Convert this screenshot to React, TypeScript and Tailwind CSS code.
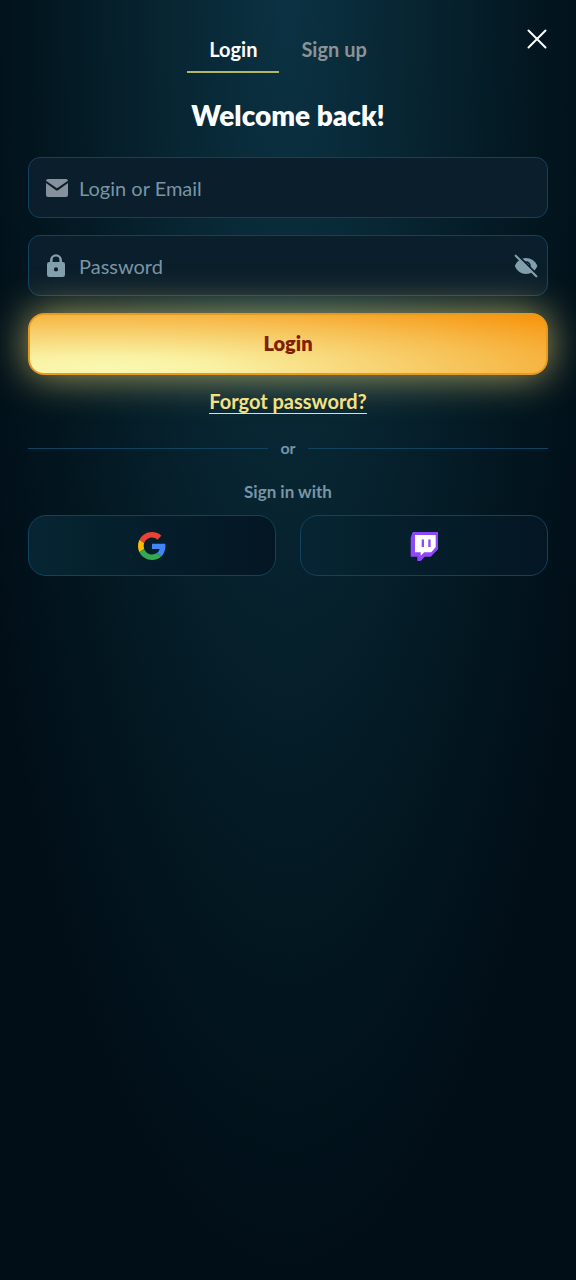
import { useState } from "react";

function MailIcon() {
  return (
    <svg viewBox="0 0 22 18" className="h-[18px] w-[22px] shrink-0 fill-[#87919c]" aria-hidden="true">
      <path d="M2 0h18a2 2 0 0 1 2 1.700L11.800 8.800a1.400 1.400 0 0 1-1.600 0L0 1.700A2 2 0 0 1 2 0z" />
      <path d="M0 4l9.600 6.900a2.400 2.400 0 0 0 2.800 0L22 4v12a2 2 0 0 1-2 2H2a2 2 0 0 1-2-2z" />
    </svg>
  );
}

function LockIcon() {
  return (
    <svg viewBox="0 0 18 23" className="h-[23px] w-[18px] shrink-0 fill-[#829fad]" aria-hidden="true">
      <path
        fillRule="evenodd"
        d="M3 8V6.200a6 6 0 0 1 12 0V8h.8A2.200 2.200 0 0 1 18 10.200v10.600A2.200 2.200 0 0 1 15.800 23H2.200A2.200 2.200 0 0 1 0 20.800V10.200A2.200 2.200 0 0 1 2.200 8zM5.600 8h6.800V6a3.400 3.400 0 0 0-6.800 0zM9 13.300a2.100 2.100 0 1 0 0 4.200 2.100 2.100 0 0 0 0-4.200z"
      />
    </svg>
  );
}

function EyeOffIcon() {
  return (
    <svg viewBox="0 0 24 24" className="h-6 w-6" aria-hidden="true">
      <mask id="eye-cut">
        <rect width="24" height="24" fill="white" />
        <path d="M10.500 8.600a3.600 3.600 0 0 1 5 4.800" fill="none" stroke="black" strokeWidth="1.500" />
        <path d="M3.200 0.600L24 21.400" stroke="black" strokeWidth="2" />
      </mask>
      <path d="M0.800 12C3 6.800 7.200 4 12 4s9.200 2.800 11.400 8c-2.200 5.200-6.600 8-11.400 8S3 17.200 0.800 12z" fill="#829fad" mask="url(#eye-cut)" />
      <path d="M1.700 1.700L22.300 22.300" stroke="#829fad" strokeWidth="2.200" strokeLinecap="round" />
    </svg>
  );
}

function GoogleIcon() {
  return (
    <svg viewBox="0 0 48 48" className="h-7 w-7" aria-hidden="true">
      <path fill="#EA4335" d="M24 9.500c3.540 0 6.710 1.220 9.210 3.600l6.850-6.850C35.900 2.380 30.470 0 24 0 14.620 0 6.510 5.380 2.560 13.220l7.980 6.190C12.430 13.720 17.740 9.500 24 9.500z" />
      <path fill="#4285F4" d="M46.980 24.550c0-1.570-.15-3.090-.38-4.550H24v9.020h12.940c-.58 2.960-2.260 5.480-4.780 7.180l7.730 6c4.510-4.180 7.090-10.360 7.090-17.650z" />
      <path fill="#FBBC05" d="M10.530 28.590c-.48-1.450-.76-2.990-.76-4.590s.27-3.140.76-4.590l-7.980-6.190C.92 16.460 0 20.120 0 24c0 3.880.92 7.540 2.560 10.780l7.970-6.190z" />
      <path fill="#34A853" d="M24 48c6.480 0 11.930-2.130 15.890-5.810l-7.730-6c-2.150 1.450-4.920 2.300-8.160 2.300-6.260 0-11.570-4.220-13.470-9.910l-7.980 6.190C6.510 42.620 14.620 48 24 48z" />
    </svg>
  );
}

function TwitchIcon() {
  return (
    <svg viewBox="0 0 28 30" className="h-[30px] w-7" aria-hidden="true">
      <path fill="#8d49f5" d="M2.700 1H28v17.300L20.700 25.700h-6L10.700 30H7.300v-4.300H.7V6.700z" />
      <path fill="#fff" d="M5 4h20.700v12L21.300 21.300H14.200L10.700 24.700v-3.400H5z" />
      <path fill="#8d49f5" d="M11.700 8.500H14V16h-2.300zM18.300 8.500h2.300V16h-2.300z" />
    </svg>
  );
}

const field =
  "flex h-[61px] items-center rounded-[12px] border border-[#11435f] bg-[#0a1e2b] pl-[17px] pr-[9px]";
const input =
  "ml-[11px] h-full min-w-0 flex-1 bg-transparent text-[20px] text-white outline-none placeholder:text-[#7895a6] placeholder:opacity-100";
const social =
  "flex h-[61px] items-center justify-center rounded-[18px] border border-[#11435f] bg-linear-to-r from-[#062532] to-[#041623]";

export default function App() {
  const [visible, setVisible] = useState(false);

  return (
    <main className="relative min-h-screen bg-[#010e17] bg-[radial-gradient(ellipse_58%_100%_at_50%_0%,#0b3243_0%,#07232f_42%,#031822_70%,#010e17_100%)] px-7 pt-[28px] pb-10 font-['Lato',sans-serif]">
      <button type="button" aria-label="Close" className="absolute top-[25px] right-[25px] flex h-7 w-7 items-center justify-center">
        <svg viewBox="0 0 20 20" className="h-5 w-5" fill="none" stroke="white" strokeWidth="2" strokeLinecap="round" aria-hidden="true">
          <path d="M1.500 1.500l17 17M18.500 1.500l-17 17" />
        </svg>
      </button>

      <nav className="flex justify-center text-[20px] leading-[43px] font-bold">
        <button type="button" className="border-b-2 border-[#b3b765] px-[22px] text-white">Login</button>
        <button type="button" className="border-b-2 border-transparent px-[22px] text-[#8b9397]">Sign up</button>
      </nav>

      <h1 className="mt-[24px] text-center text-[28px] leading-[36px] font-extrabold text-white">Welcome back!</h1>

      <form className="mt-[24px] flex flex-col gap-[17px]" onSubmit={(e) => e.preventDefault()}>
        <div className={field}>
          <label htmlFor="email" className="flex w-[22px]"><MailIcon /></label>
          <input id="email" type="text" aria-label="Login or Email" placeholder="Login or Email" className={input} />
        </div>
        <div className={field}>
          <label htmlFor="password" className="flex w-[22px] pl-px"><LockIcon /></label>
          <input id="password" type={visible ? "text" : "password"} aria-label="Password" placeholder="Password" className={input} />
          <button type="button" aria-label="Toggle password visibility" onClick={() => setVisible(!visible)}>
            <EyeOffIcon />
          </button>
        </div>
        <button
          type="submit"
          className="relative h-[62px] rounded-[16px] border-2 border-[#e79a20] bg-[radial-gradient(ellipse_125%_130%_at_15%_90%,#faf8b2_0%,#f9f2a4_16%,#f6b847_65%,#f8930a_94%)] bg-origin-border pb-[2px] text-[20px] font-extrabold text-[#7f2004] shadow-[0_0_40px_rgba(249,225,120,0.7)]"
        >
          Login
        </button>
      </form>

      <div className="mt-[14px] flex justify-center">
        <a href="#forgot" className="relative border-b border-[#f5e183] text-[20px] leading-[24px] font-bold text-[#f5e183]">Forgot password?</a>
      </div>

      <div className="mt-[22px] flex items-center gap-3 text-[16px] leading-[24px] font-bold text-[#7895a6]">
        <span className="h-px flex-1 bg-[#11435f]" />
        <span>or</span>
        <span className="h-px flex-1 bg-[#11435f]" />
      </div>

      <p className="mt-5 text-center text-[17px] leading-[24px] font-bold text-[#7895a6]">Sign in with</p>

      <div className="mt-[11px] grid grid-cols-2 gap-6">
        <button type="button" aria-label="Google" className={social}>
          <GoogleIcon />
        </button>
        <button type="button" aria-label="Twitch" className={social}>
          <TwitchIcon />
        </button>
      </div>
    </main>
  );
}
